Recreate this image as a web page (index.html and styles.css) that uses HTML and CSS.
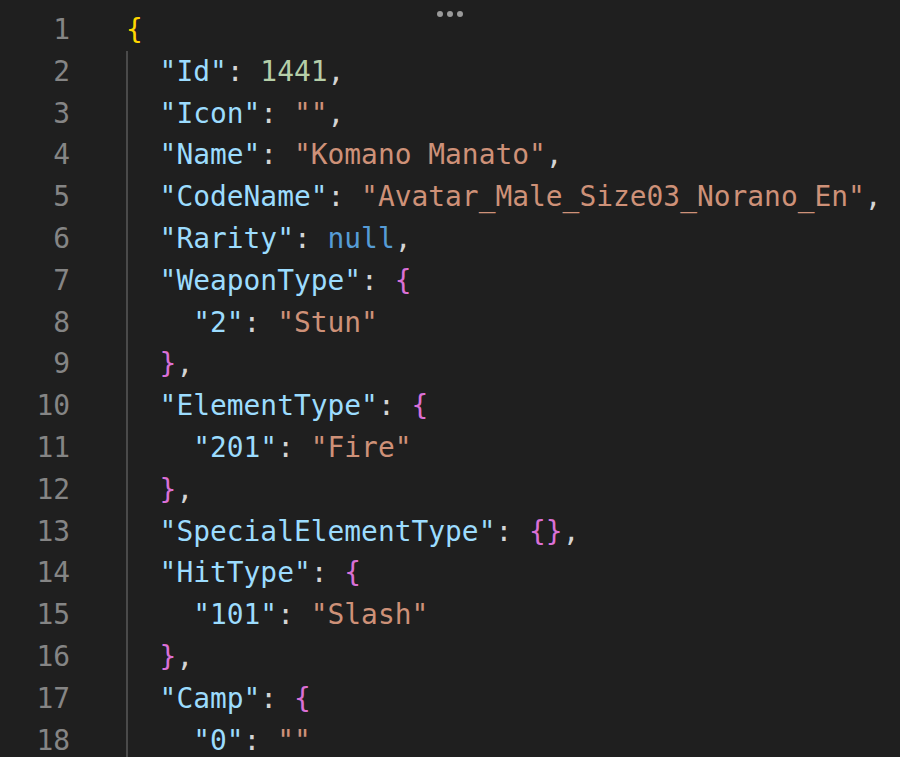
FILE: index.html
```html
<!DOCTYPE html>
<html lang="en">
<head>
  <meta charset="UTF-8">
  <meta name="viewport" content="width=device-width, initial-scale=1.0">
  <title>avatar.json</title>
  <link rel="stylesheet" href="styles.css">
</head>
<body>
  <div class="editor">
    <!-- menu dots shown over the top of the editor -->
    <div class="dots"><span></span><span></span><span></span></div>

    <div class="gutter">
      <div class="ln">1</div>
      <div class="ln">2</div>
      <div class="ln">3</div>
      <div class="ln">4</div>
      <div class="ln">5</div>
      <div class="ln">6</div>
      <div class="ln">7</div>
      <div class="ln">8</div>
      <div class="ln">9</div>
      <div class="ln">10</div>
      <div class="ln">11</div>
      <div class="ln">12</div>
      <div class="ln">13</div>
      <div class="ln">14</div>
      <div class="ln">15</div>
      <div class="ln">16</div>
      <div class="ln">17</div>
      <div class="ln">18</div>
    </div>

    <div class="code">
      <div class="line"><span class="b1">{</span></div>
      <div class="block">
        <div class="line"><span class="key">"Id"</span><span class="p">: </span><span class="num">1441</span><span class="p">,</span></div>
        <div class="line"><span class="key">"Icon"</span><span class="p">: </span><span class="str">""</span><span class="p">,</span></div>
        <div class="line"><span class="key">"Name"</span><span class="p">: </span><span class="str">"Komano Manato"</span><span class="p">,</span></div>
        <div class="line"><span class="key">"CodeName"</span><span class="p">: </span><span class="str">"Avatar_Male_Size03_Norano_En"</span><span class="p">,</span></div>
        <div class="line"><span class="key">"Rarity"</span><span class="p">: </span><span class="kw">null</span><span class="p">,</span></div>
        <div class="line"><span class="key">"WeaponType"</span><span class="p">: </span><span class="b2">{</span></div>
        <div class="line in"><span class="key">"2"</span><span class="p">: </span><span class="str">"Stun"</span></div>
        <div class="line"><span class="b2">}</span><span class="p">,</span></div>
        <div class="line"><span class="key">"ElementType"</span><span class="p">: </span><span class="b2">{</span></div>
        <div class="line in"><span class="key">"201"</span><span class="p">: </span><span class="str">"Fire"</span></div>
        <div class="line"><span class="b2">}</span><span class="p">,</span></div>
        <div class="line"><span class="key">"SpecialElementType"</span><span class="p">: </span><span class="b2">{}</span><span class="p">,</span></div>
        <div class="line"><span class="key">"HitType"</span><span class="p">: </span><span class="b2">{</span></div>
        <div class="line in"><span class="key">"101"</span><span class="p">: </span><span class="str">"Slash"</span></div>
        <div class="line"><span class="b2">}</span><span class="p">,</span></div>
        <div class="line"><span class="key">"Camp"</span><span class="p">: </span><span class="b2">{</span></div>
        <div class="line in"><span class="key">"0"</span><span class="p">: </span><span class="str">""</span></div>
      </div>
    </div>
  </div>
</body>
</html>
```

FILE: styles.css
```css
html, body {
  margin: 0;
  padding: 0;
  background: #1f1f1f;
}

.editor {
  position: relative;
  display: flex;
  width: 900px;
  height: 757px;
  overflow: hidden;
  background: #1f1f1f;
  font-family: "DejaVu Sans Mono", "Liberation Mono", monospace;
  font-size: 27.9px;
  padding-top: 9px;
  box-sizing: border-box;
}

.dots {
  position: absolute;
  top: 11px;
  left: 437px;
  display: flex;
  gap: 4px;
}
.dots span {
  width: 6px;
  height: 6px;
  border-radius: 50%;
  background: #9a9a9a;
}

.gutter {
  width: 70px;
  flex: none;
  text-align: right;
  color: #858585;
  margin-right: 56px;
}

.ln, .line {
  height: 41.8px;
  line-height: 41.8px;
  white-space: pre;
}

.code {
  flex: 1;
  color: #d4d4d4;
}

/* indent guide of the top-level object */
.block {
  border-left: 2px solid #4a4a4a;
  padding-left: 31.6px;
}

.in {
  padding-left: 33.6px;
}

.key { color: #9cdcfe; }
.str { color: #ce9178; }
.num { color: #b5cea8; }
.kw  { color: #569cd6; }
.p   { color: #d4d4d4; }
.b1  { color: #ffd700; }
.b2  { color: #da70d6; }
```
